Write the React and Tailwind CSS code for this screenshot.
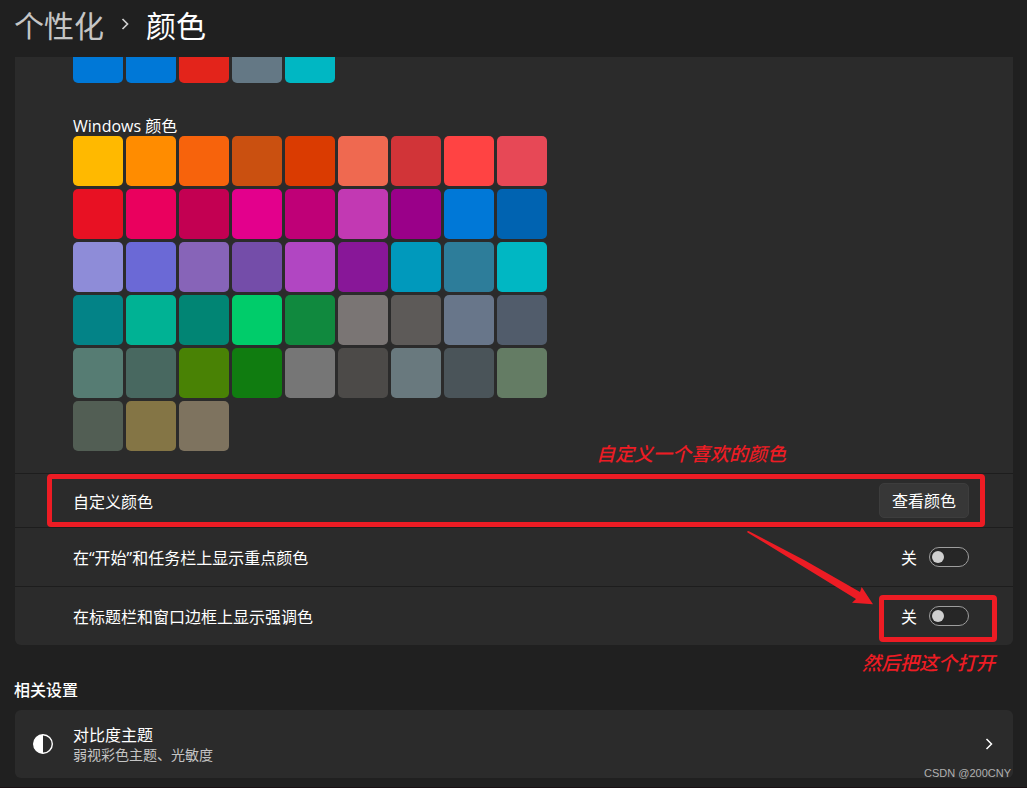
import React from "react";

const recentColors = ["#0078d7", "#0078d7", "#e3241b", "#647885", "#00b7c3"];

const windowsColors = [
  "#ffb900", "#ff8c00", "#f7630c", "#ca5010", "#da3b01", "#ef6950", "#d13438", "#ff4343", "#e74856",
  "#e81123", "#ea005e", "#c30052", "#e3008c", "#bf0077", "#c239b3", "#9a0089", "#0078d7", "#0063b1",
  "#8e8cd8", "#6b69d6", "#8764b8", "#744da9", "#b146c2", "#881798", "#0099bc", "#2d7d9a", "#00b7c3",
  "#038387", "#00b294", "#018574", "#00cc6a", "#10893e", "#7a7574", "#5d5a58", "#68768a", "#515c6b",
  "#567c73", "#486860", "#498205", "#107c10", "#767676", "#4c4a48", "#69797e", "#4a5459", "#647c64",
  "#525e54", "#847545", "#7e735f",
];

function Swatch({ color }) {
  return (
    <button
      type="button"
      aria-label={color}
      className="size-[50px] shrink-0 rounded-[5px]"
      style={{ backgroundColor: color }}
    />
  );
}

function Chevron({ className }) {
  return (
    <svg viewBox="0 0 8 12" className={className} fill="none" stroke="currentColor" aria-hidden="true">
      <path d="M1.5 1 6.5 6 1.5 11" />
    </svg>
  );
}

function ToggleRow({ id, label, children }) {
  return (
    <div className="relative flex h-[59px] items-center justify-between border-t border-[#1d1d1d] pr-11 pl-[58px]">
      <label htmlFor={id} className="pt-0.5">{label}</label>
      <div className="flex items-center gap-3">
        <span className="pt-0.5">关</span>
        <input
          id={id}
          type="checkbox"
          role="switch"
          className="flex h-5 w-10 appearance-none items-center rounded-full border border-[#9e9e9e] bg-[#262626] px-0.5 before:size-3 before:rounded-full before:bg-[#cfcfcf] checked:justify-end"
        />
      </div>
      {children}
    </div>
  );
}

export default function App() {
  return (
    <div className="min-h-screen border-b border-[#1a1114] bg-[#202020] font-['Open_Sans','Noto_Sans_CJK_SC',sans-serif] text-base leading-5 text-white">
      <header>
        <nav className="flex h-[57px] items-center px-3.5 pb-2.5 font-['Noto_Sans_CJK_SC',sans-serif] text-[30px] leading-10 font-normal">
          <a href="#personalization" className="text-[#c5c5c5]">个性化</a>
          <Chevron className="mx-[17px] h-3 w-2 stroke-[1.7] text-[#d0d0d0]" />
          <h1>颜色</h1>
        </nav>
      </header>

      <main className="pr-3.5 pb-2 pl-[15px]">
        <section className="rounded-b-md bg-[#2b2b2b]">
          <div className="px-[58px] pb-[22px]">
            <div className="flex h-[26px] items-end gap-[3px] overflow-hidden">
              {recentColors.map((c, i) => <Swatch key={i} color={c} />)}
            </div>
            <h2 className="pt-[33px]">Windows 颜色</h2>
            <div className="grid grid-cols-[repeat(9,50px)] gap-[3px]">
              {windowsColors.map((c) => <Swatch key={c} color={c} />)}
            </div>
          </div>

          <div className="relative flex h-[54px] items-center justify-between border-t border-[#1d1d1d] pr-11 pl-[58px]">
            <span className="pt-0.5">自定义颜色</span>
            <button type="button" className="h-[35px] rounded-[5px] border border-[#3d3d3d] bg-[#373737] px-3">
              查看颜色
            </button>
            <div className="pointer-events-none absolute inset-y-0 right-7 left-8 rounded-sm border-5 border-[#ed1c24]" />
            <p className="absolute right-[227px] bottom-full pb-2.5 text-[19px] font-medium whitespace-nowrap text-[#ed1c24] italic">
              自定义一个喜欢的颜色
            </p>
          </div>

          <ToggleRow id="accent-taskbar" label="在“开始”和任务栏上显示重点颜色">
            <svg
              viewBox="0 0 127 75"
              className="pointer-events-none absolute top-[3px] right-[139px] z-10 h-[75px] w-[127px]"
              fill="#ed1c24"
              aria-hidden="true"
            >
              <path d="M0 .5 1.5 0 58 29.5 113 61 114.7 56 126 73.3 105 71.7 109 68 52 33 .5 1.5Z" />
            </svg>
          </ToggleRow>

          <ToggleRow id="accent-titlebar" label="在标题栏和窗口边框上显示强调色">
            <div className="pointer-events-none absolute top-2 right-4 h-[47px] w-[118px] rounded-sm border-5 border-[#ed1c24]" />
            <p className="absolute top-full right-[18px] pt-2 text-[19px] font-medium whitespace-nowrap text-[#ed1c24] italic">
              然后把这个打开
            </p>
          </ToggleRow>
        </section>

        <section>
          <h2 className="-ml-px pt-[35px] pb-[10px] font-medium">相关设置</h2>
          <a href="#contrast" className="flex h-[68px] items-center rounded-md bg-[#2b2b2b] pr-5 pl-[18px]">
            <svg viewBox="0 0 20 20" className="size-5" aria-hidden="true">
              <circle cx="10" cy="10" r="9.3" fill="none" stroke="white" strokeWidth="1.4" />
              <path d="M10 .7a9.3 9.3 0 0 0 0 18.6Z" fill="white" />
            </svg>
            <div className="ml-5 grow pt-0.5">
              <div>对比度主题</div>
              <div className="text-sm leading-5 text-[#c5c5c5]">弱视彩色主题、光敏度</div>
            </div>
            <Chevron className="h-3 w-2 stroke-[1.5]" />
          </a>
        </section>
      </main>

      <p className="absolute right-4 bottom-[7px] font-['Liberation_Sans',sans-serif] text-[11px] leading-4 text-[#b0b0b0]">
        CSDN @200CNY
      </p>
    </div>
  );
}
